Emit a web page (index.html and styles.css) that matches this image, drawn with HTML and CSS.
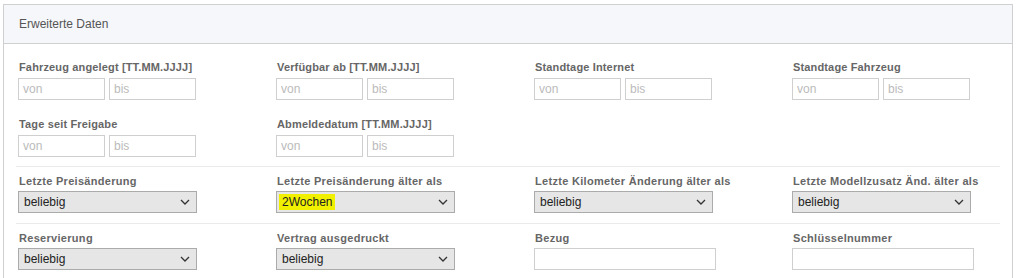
FILE: index.html
```html
<!DOCTYPE html>
<html lang="de">
<head>
    <meta charset="UTF-8">
    <title>Erweiterte Daten</title>
    <link rel="stylesheet" href="styles.css">
</head>
<body>
    <div class="panel">
        <div class="panel-head">Erweiterte Daten</div>
        <div class="panel-body">
            <div class="row">
                <div class="field">
                    <label class="lbl">Fahrzeug angelegt [TT.MM.JJJJ]</label>
                    <div class="range"><input type="text" placeholder="von"><input type="text" placeholder="bis"></div>
                </div>
                <div class="field">
                    <label class="lbl">Verfügbar ab [TT.MM.JJJJ]</label>
                    <div class="range"><input type="text" placeholder="von"><input type="text" placeholder="bis"></div>
                </div>
                <div class="field">
                    <label class="lbl">Standtage Internet</label>
                    <div class="range"><input type="text" placeholder="von"><input type="text" placeholder="bis"></div>
                </div>
                <div class="field">
                    <label class="lbl">Standtage Fahrzeug</label>
                    <div class="range"><input type="text" placeholder="von"><input type="text" placeholder="bis"></div>
                </div>
            </div>
            <div class="row row-second">
                <div class="field">
                    <label class="lbl">Tage seit Freigabe</label>
                    <div class="range"><input type="text" placeholder="von"><input type="text" placeholder="bis"></div>
                </div>
                <div class="field">
                    <label class="lbl">Abmeldedatum [TT.MM.JJJJ]</label>
                    <div class="range"><input type="text" placeholder="von"><input type="text" placeholder="bis"></div>
                </div>
            </div>
            <div class="row row-sep">
                <div class="field">
                    <label class="lbl lbl-wide">Letzte Preisänderung</label>
                    <div class="select"><span>beliebig</span><svg width="10" height="6" viewBox="0 0 10 6"><path d="M1 1l4 4 4-4" fill="none" stroke="#333" stroke-width="1.3"/></svg></div>
                </div>
                <div class="field">
                    <label class="lbl lbl-wide">Letzte Preisänderung älter als</label>
                    <div class="select"><span class="mark">2Wochen</span><svg width="10" height="6" viewBox="0 0 10 6"><path d="M1 1l4 4 4-4" fill="none" stroke="#333" stroke-width="1.3"/></svg></div>
                </div>
                <div class="field">
                    <label class="lbl lbl-wide">Letzte Kilometer Änderung älter als</label>
                    <div class="select"><span>beliebig</span><svg width="10" height="6" viewBox="0 0 10 6"><path d="M1 1l4 4 4-4" fill="none" stroke="#333" stroke-width="1.3"/></svg></div>
                </div>
                <div class="field">
                    <label class="lbl lbl-wide">Letzte Modellzusatz Änd. älter als</label>
                    <div class="select"><span>beliebig</span><svg width="10" height="6" viewBox="0 0 10 6"><path d="M1 1l4 4 4-4" fill="none" stroke="#333" stroke-width="1.3"/></svg></div>
                </div>
            </div>
            <div class="row row-sep">
                <div class="field">
                    <label class="lbl lbl-wide">Reservierung</label>
                    <div class="select"><span>beliebig</span><svg width="10" height="6" viewBox="0 0 10 6"><path d="M1 1l4 4 4-4" fill="none" stroke="#333" stroke-width="1.3"/></svg></div>
                </div>
                <div class="field">
                    <label class="lbl lbl-wide">Vertrag ausgedruckt</label>
                    <div class="select"><span>beliebig</span><svg width="10" height="6" viewBox="0 0 10 6"><path d="M1 1l4 4 4-4" fill="none" stroke="#333" stroke-width="1.3"/></svg></div>
                </div>
                <div class="field">
                    <label class="lbl lbl-wide">Bezug</label>
                    <input type="text" class="text-wide">
                </div>
                <div class="field">
                    <label class="lbl lbl-wide">Schlüsselnummer</label>
                    <input type="text" class="text-wide">
                </div>
            </div>
        </div>
    </div>
</body>
</html>
```

FILE: styles.css
```css
body { margin: 0; padding: 4px 6px 0 3px; font-family: "Liberation Sans", Arial, sans-serif; background: #fff; overflow: hidden; }
.panel { box-sizing: border-box; border: 1px solid #d0d0d0; border-bottom: none; height: 274px; }
.panel-head { background: #f5f7fa; border-bottom: 1px solid #d0d0d0; height: 38px; line-height: 38px; padding-left: 15px; font-size: 12px; color: #555; }
.panel-body { padding: 16px 12px 0 14px; }
.row { display: grid; grid-template-columns: repeat(4, 258px); }
.row-second { margin-top: 17px; padding-bottom: 9px; }
.row-sep { border-top: 1px solid #ebebeb; padding: 7px 0 10px; margin-left: -2px; padding-left: 2px; }
.field { display: flex; flex-direction: column; }
.lbl { font-size: 11px; font-weight: bold; color: #666; height: 14px; line-height: 14px; margin-bottom: 4px; padding-left: 1px; letter-spacing: 0.15px; }
.lbl-wide { letter-spacing: 0.3px; margin-bottom: 3px; }
.range { display: flex; gap: 4px; }
.range input { width: 87px; }
input { box-sizing: border-box; height: 22px; border: 1px solid #cfcfcf; padding: 0 4px; font-family: "Liberation Sans", Arial, sans-serif; font-size: 12px; color: #333; margin: 0; }
input::placeholder { color: #bbb; }
.text-wide { width: 182px; }
.select { box-sizing: border-box; width: 179px; height: 22px; border: 1px solid #ababab; background: #e6e6e6; display: flex; align-items: center; justify-content: space-between; padding: 0 6px 0 2px; font-size: 12px; color: #222; }
.select span { padding: 1px 3px; }
.mark { background: #f0f000; }
```
